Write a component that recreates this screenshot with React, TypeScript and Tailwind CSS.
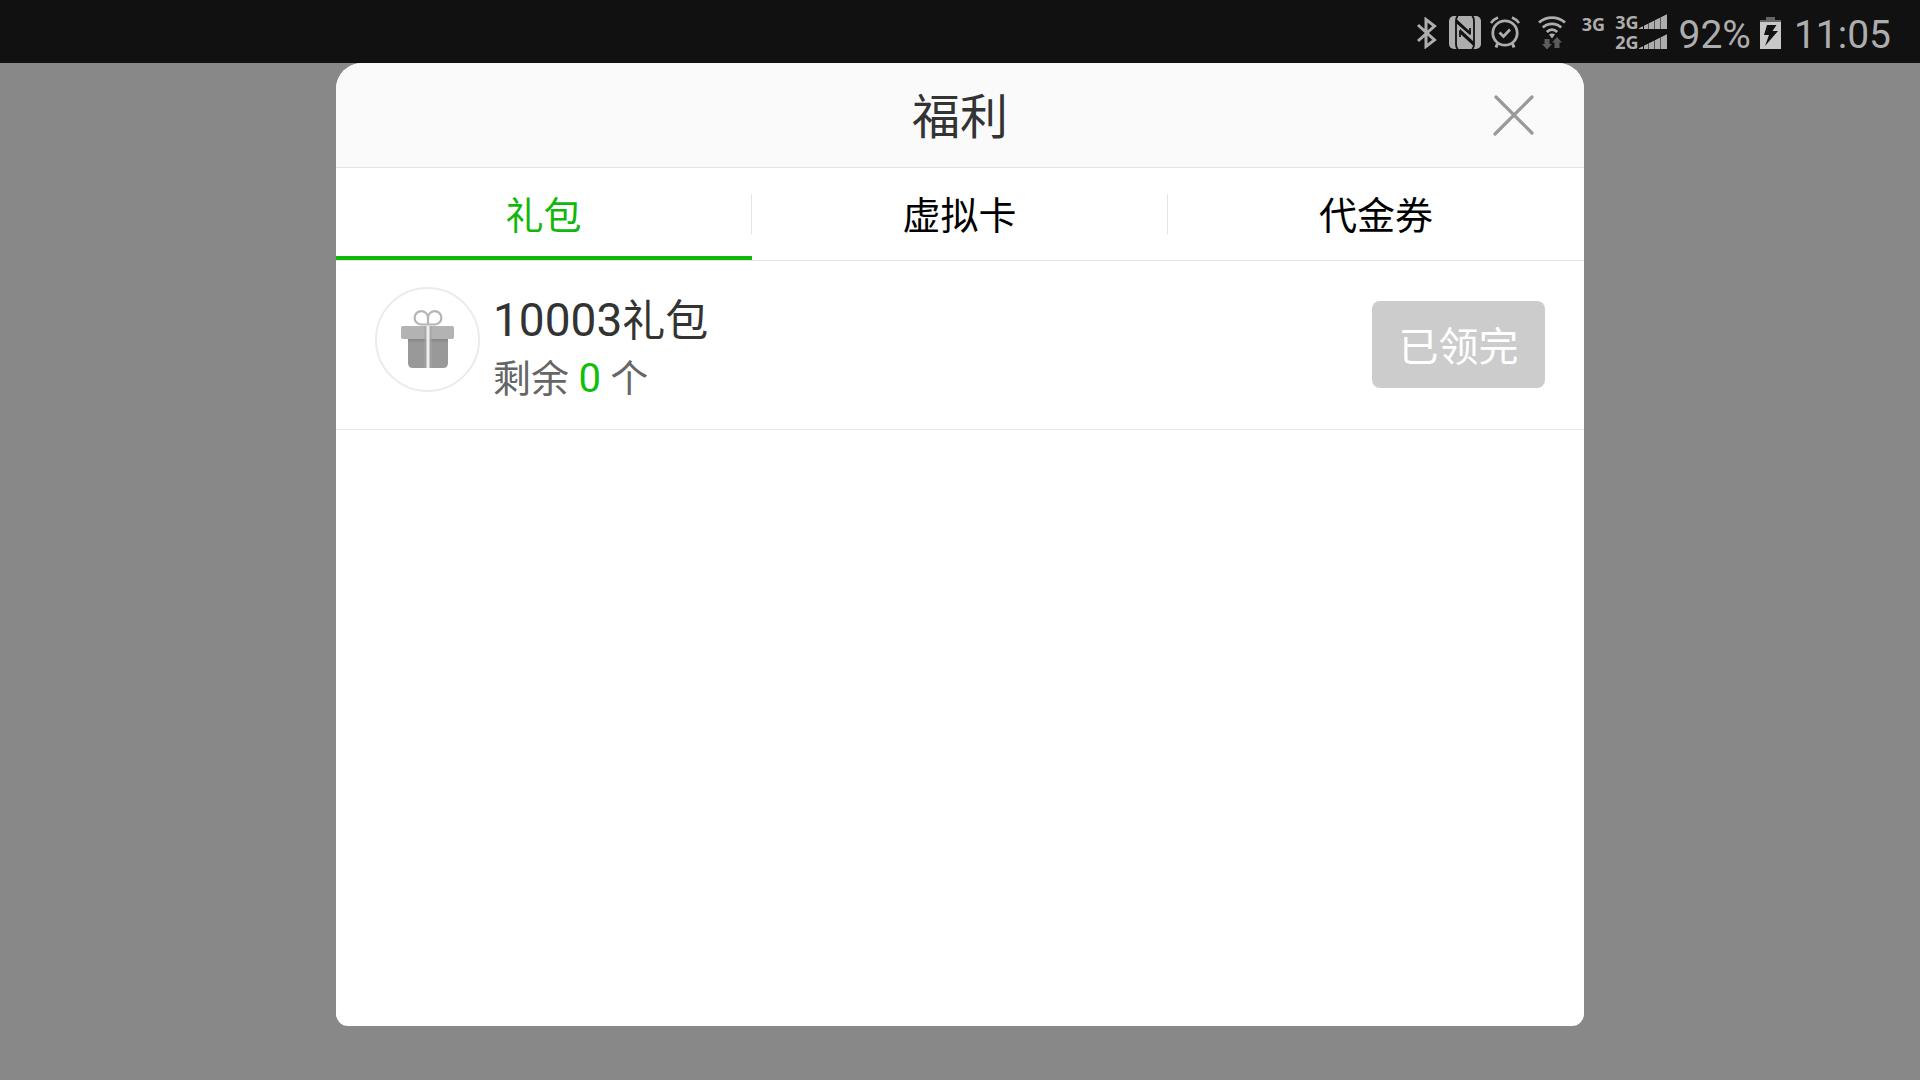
const latin = "font-['Roboto','Noto_Sans_CJK_SC',sans-serif]";

function Bluetooth() {
  return (
    <svg aria-label="蓝牙" width="22" height="32" viewBox="0 0 22 32" fill="none" stroke="#adadad" strokeWidth="3">
      <path d="M2 8L18.500 23L10 29.500V2.500L18.500 9L2 24" />
    </svg>
  );
}

function Nfc() {
  return (
    <svg aria-label="NFC" width="32" height="33" viewBox="0 0 32 33">
      <rect width="32" height="33" rx="5" fill="#adadad" />
      <g fill="none" stroke="#111" strokeWidth="1.800">
        <path d="M9 0Q7 1 7 5V28Q7 32 9 33" />
        <path d="M23 0Q25 1 25 5V28Q25 32 23 33" />
        <path d="M7 4L21 17V12" />
        <path d="M25 29L11 16V21" />
      </g>
      <path fill="#111" d="M7 3L21 16V19L7 7ZM25 30L11 17V13L25 26Z" />
    </svg>
  );
}

function Alarm() {
  return (
    <svg aria-label="闹钟" width="30" height="33" viewBox="0 0 30 33" fill="none" stroke="#adadad" strokeWidth="2.500">
      <circle cx="15" cy="17" r="12.200" strokeWidth="2.800" />
      <path d="M9.500 16.500L13.500 20.500L20 13.500" strokeWidth="2.800" />
      <path d="M1 7C2.500 4.500 4.500 3 8 1.500M29 7C27.500 4.500 25.500 3 22 1.500" />
      <path d="M7.500 27.500L6 31.500M22.500 27.500L24 31.500" strokeWidth="3" />
    </svg>
  );
}

function Wifi() {
  return (
    <svg aria-label="无线网络" width="28" height="34" viewBox="0 0 28 34" fill="none">
      <g stroke="#adadad" strokeWidth="2.800">
        <path d="M1 6.500C8.500 0 19.500 0 27 6.500" />
        <path d="M4.800 11.500C10 6.700 18 6.700 23.200 11.500" />
        <path d="M8.800 16C12 13 16 13 19.200 16" />
      </g>
      <path fill="#adadad" d="M11 18.500C12.500 17 15.500 17 17 18.500L14 22.500Z" />
      <path fill="#5c5c5c" d="M6.500 23H11.500V28H14L9 33.500L4 28H6.500ZM16.500 32V26.500H14L19 21L24 26.500H21.500V32Z" />
    </svg>
  );
}

function SignalBars() {
  return (
    <svg aria-hidden="true" width="28" height="15" viewBox="0 0 28 15">
      <path fill="#adadad" d="M0 15V14L28 0V15Z" />
      <path stroke="#111" strokeWidth="1" d="M4.500 0V15" />
      <path stroke="#555" strokeWidth="1" d="M9.500 0V15M15.500 0V15M21.500 0V15" />
      <path fill="#111" d="M0 0H28L0 14Z" />
    </svg>
  );
}

function Battery() {
  return (
    <svg aria-label="充电中" width="21" height="32" viewBox="0 0 21 32">
      <path fill="#666" d="M6 0H15V3H21V5H0V3H6Z" />
      <path fill="#c8c8c8" d="M0 5H21V32H0Z" />
      <path fill="#111" d="M7 8H16.500L12.500 14H18L5 29L9 18H4Z" />
    </svg>
  );
}

function StatusBar() {
  return (
    <header className="flex h-[63px] shrink-0 items-center justify-end bg-[#111] pt-[2px] pr-[29px] text-[#adadad]">
      <Bluetooth />
      <span className="ml-[11px]"><Nfc /></span>
      <span className="ml-[9px]"><Alarm /></span>
      <span className="ml-[18px]"><Wifi /></span>
      <span className="mb-[17px] ml-4 font-['Open_Sans',sans-serif] text-[18px] leading-[20px] font-bold">3G</span>
      <span className="mb-[2px] ml-[10px] flex flex-col font-['Open_Sans',sans-serif] text-[18px] leading-[20px] font-bold">
        <span className="flex items-center gap-px">3G<SignalBars /></span>
        <span className="flex items-center gap-px">2G<SignalBars /></span>
      </span>
      <span className="ml-[11px] pt-1 text-[39px] leading-[48px]">92%</span>
      <span className="ml-[9px]"><Battery /></span>
      <time className="ml-[13px] pt-1 text-[39px] leading-[48px]">11:05</time>
    </header>
  );
}

function GiftIcon() {
  return (
    <svg aria-hidden="true" width="54" height="60" viewBox="0 0 54 60">
      <defs>
        <linearGradient id="lid-shadow" x1="0" y1="0" x2="0" y2="1">
          <stop offset="0" stopColor="#808080" />
          <stop offset="1" stopColor="#999" />
        </linearGradient>
      </defs>
      <g fill="none" stroke="#b5b5b5" strokeWidth="2.200">
        <path d="M27 16V9A6.700 6.700 0 1 0 20 15.500H34A6.700 6.700 0 1 0 27 9" />
      </g>
      <path fill="#999" d="M7 28H47V54Q47 59 42 59H12Q7 59 7 54Z" />
      <path fill="url(#lid-shadow)" d="M7 29H47V34H7Z" />
      <rect y="17" width="53" height="13" rx="2" fill="#b3b3b3" />
      <path fill="#a3a3a3" d="M23 17H31V59H23Z" opacity="0.600" />
      <path fill="#eee" d="M25.500 17H28.500V59H25.500Z" />
    </svg>
  );
}

const tabs = ["礼包", "虚拟卡", "代金券"];

export default function App() {
  return (
    <div className={`flex min-h-screen flex-col bg-[#888] ${latin}`}>
      <StatusBar />
      <main role="dialog" aria-labelledby="title" className="mx-auto mb-[54px] flex w-[65%] grow flex-col overflow-hidden rounded-t-[26px] rounded-b-[12px] bg-white">
        <div className="grid h-[105px] grid-cols-[1fr_auto_1fr] items-center border-b border-[#e5e5e5] bg-[#fafafa] px-12">
          <h1 id="title" className="col-start-2 pt-[6px] text-[48px] leading-[64px] text-[#333]">福利</h1>
          <button type="button" aria-label="关闭" className="justify-self-end">
            <svg width="44" height="44" viewBox="0 0 44 44" stroke="#999" strokeWidth="3.200" strokeLinecap="round">
              <path d="M4 4L40 40M40 4L3 41" />
            </svg>
          </button>
        </div>
        <div role="tablist" className="grid h-[93px] grid-cols-3 border-b border-[#e5e5e5] text-[38px] leading-[56px]">
          {tabs.map((tab, i) => (
            <button
              key={tab}
              type="button"
              role="tab"
              aria-selected={i === 0}
              className={
                i === 0
                  ? "flex items-center border-b-4 border-[#11b70b] pt-1 text-[#11b70b]"
                  : "flex items-center text-black"
              }
            >
              <span className="grow pt-1">{tab}</span>
              {i < 2 && <span className="h-10 w-px bg-[#e5e5e5]" />}
            </button>
          ))}
        </div>
        <ul>
          <li className="flex h-[169px] items-center border-b border-[#e5e5e5] px-[39px] pb-[2px]">
            <span className="mb-[10px] flex size-[105px] items-center justify-center rounded-full border-2 border-[#ebebeb]">
              <GiftIcon />
            </span>
            <div className="ml-[13px] grow pt-2">
              <h2 className="text-[46px] leading-[60px] text-[#333]">10003<span className="text-[43px]">礼包</span></h2>
              <p className="text-[38px] leading-[56px] text-[#666]">剩余 <span className="text-[40px] text-[#0fbf0a]">0</span> 个</p>
            </div>
            <button type="button" disabled className="h-[87px] w-[173px] rounded-lg bg-[#ccc] pt-2 text-[40px] leading-[56px] text-white">已领完</button>
          </li>
        </ul>
      </main>
    </div>
  );
}
